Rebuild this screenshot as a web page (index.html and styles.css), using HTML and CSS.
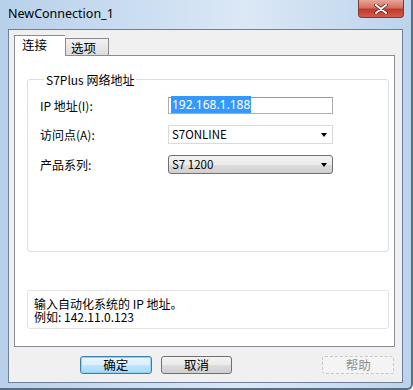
FILE: index.html
```html
<!DOCTYPE html>
<html lang="zh-CN">
<head>
    <meta charset="UTF-8">
    <title>NewConnection_1</title>
    <link rel="stylesheet" href="styles.css">
</head>
<body>

    <div class="window">
        <div class="title-bar">
            <span class="title">NewConnection_1</span>
            <span class="close-btn">
                <svg width="14" height="10" viewBox="0 0 14 10">
                    <path d="M2 1 L12 9 M12 1 L2 9" stroke="#5a1a1a" stroke-width="3.4" stroke-linecap="round"/>
                    <path d="M2 1 L12 9 M12 1 L2 9" stroke="#fff" stroke-width="2" stroke-linecap="round"/>
                </svg>
            </span>
        </div>

        <div class="client">
            <div class="tabs">
                <div class="tab active">连接</div>
                <div class="tab">选项</div>
            </div>

            <div class="tab-panel">
                <fieldset class="group">
                    <legend>S7Plus 网络地址</legend>
                    <div class="form-grid">
                        <label>IP 地址(I):</label>
                        <div class="text-input"><span class="selected">192.168.1.188</span></div>

                        <label>访问点(A):</label>
                        <div class="combo">S7ONLINE<span class="arrow"></span></div>

                        <label>产品系列:</label>
                        <div class="combo combo-list">S7 1200<span class="arrow"></span></div>
                    </div>
                </fieldset>

                <div class="hint">
                    <div class="hint-line">输入自动化系统的 IP 地址。</div>
                    <div class="hint-line">例如: 142.11.0.123</div>
                </div>
            </div>

            <div class="buttons">
                <button class="btn btn-default">确定</button>
                <button class="btn">取消</button>
                <button class="btn btn-help">帮助</button>
            </div>
        </div>
    </div>

</body>
</html>
```

FILE: styles.css
```css
body {
    margin: 0;
    background: #ffffff;
    font-family: "Noto Sans CJK SC", "Noto Sans", sans-serif;
    font-size: 12px;
    color: #000;
}

.window {
    width: 413px;
    height: 390px;
    box-sizing: border-box;
    background: linear-gradient(90deg, #b8d0ea 0%, #cfe0f3 40%, #dbe8f6 60%, #bcd3ec 100%);
    border-right: 2px solid #5b6d80;
    border-bottom: 2px solid #5b6d80;
    border-bottom-right-radius: 6px;
    display: flex;
    flex-direction: column;
}

.title-bar {
    height: 29px;
    display: flex;
    align-items: flex-start;
    justify-content: space-between;
    padding-left: 8px;
    padding-right: 7px;
}

.title {
    font-family: "Noto Sans", sans-serif;
    font-size: 12.5px;
    margin-top: 5px;
    color: #000;
}

.close-btn {
    width: 46px;
    height: 18px;
    box-sizing: border-box;
    border: 1px solid #7a3b3b;
    border-top: none;
    border-bottom-left-radius: 4px;
    border-bottom-right-radius: 4px;
    background: linear-gradient(#e8a69a 0%, #d4705f 45%, #c0392b 55%, #d45a4a 100%);
    display: flex;
    align-items: center;
    justify-content: center;
}

.client {
    margin: 0 8px 5px 8px;
    flex: 1;
    background: #f0f0f0;
    border: 1px solid #6f8197;
    padding: 5px 8px 0 5px;
}

.tabs {
    display: flex;
    align-items: flex-end;
    height: 20px;
    position: relative;
    z-index: 1;
}

.tab {
    box-sizing: border-box;
    height: 17px;
    width: 44px;
    padding-left: 5px;
    border: 1px solid #898c95;
    border-bottom: none;
    background: linear-gradient(#f2f2f2, #dcdcdc);
    line-height: 18px;
    font-size: 12.5px;
}

.tab.active {
    height: 21px;
    width: 51px;
    padding-left: 7px;
    background: #ffffff;
    margin-bottom: -1px;
    border-right: none;
    line-height: 18px;
}

.tab-panel {
    box-sizing: border-box;
    height: 292px;
    width: 381px;
    background: #ffffff;
    border: 1px solid #898c95;
    padding: 15px 6px 0 12px;
}

.group {
    margin: 0;
    width: 362px;
    height: 181px;
    box-sizing: border-box;
    border: 1px solid #d5dfe5;
    border-radius: 3px;
    padding: 9px 0 0 12px;
}

.group legend {
    padding: 0 2px;
    margin-left: 4px;
    font-size: 12px;
}

.form-grid {
    display: grid;
    grid-template-columns: 128px 165px;
    grid-template-rows: 17px 19px 19px;
    row-gap: 11px;
    align-items: center;
}

.form-grid label {
    font-size: 12px;
}

.text-input {
    height: 17px;
    box-sizing: border-box;
    border: 1px solid #abadb3;
    border-top-color: #8e9aa8;
    background: #fff;
    padding-left: 2px;
    line-height: 14px;
    font-family: "Noto Sans", sans-serif;
    font-size: 12px;
}

.selected {
    background: #3399ff;
    color: #fff;
    padding: 0 1px;
}

.combo {
    position: relative;
    height: 19px;
    box-sizing: border-box;
    border: 1px solid #dadada;
    background: #fff;
    padding-left: 3px;
    line-height: 17px;
    font-size: 11.5px;
}

.combo-list {
    border: 1px solid #707070;
    border-radius: 3px;
    background: linear-gradient(#f2f2f2 0%, #ebebeb 50%, #dddddd 51%, #cfcfcf 100%);
}

.arrow {
    position: absolute;
    right: 5px;
    top: 7px;
    width: 0;
    height: 0;
    border-left: 3.5px solid transparent;
    border-right: 3.5px solid transparent;
    border-top: 4px solid #000;
}

.hint {
    margin-top: 38px;
    width: 362px;
    height: 39px;
    box-sizing: border-box;
    border: 1px solid #e3e3e3;
    border-radius: 3px;
    padding: 6px 0 0 6px;
    font-size: 12px;
}

.hint-line {
    height: 13px;
    line-height: 13px;
}

.buttons {
    display: flex;
    margin-top: 9px;
    padding-left: 66px;
}

.btn {
    width: 73px;
    height: 18px;
    box-sizing: border-box;
    border: 1px solid #707070;
    border-radius: 3px;
    background: linear-gradient(#f2f2f2 0%, #ebebeb 50%, #dddddd 51%, #cfcfcf 100%);
    font-family: "Noto Sans CJK SC", sans-serif;
    font-size: 12.5px;
    line-height: 14px;
    padding: 0;
    margin-right: 9px;
}

.btn-default {
    border-color: #3c7fb1;
    background: linear-gradient(#eaf6fd 0%, #d9f0fc 50%, #bee6fd 51%, #a7d9f5 100%);
    box-shadow: inset 0 0 0 1px #8fd1f5;
}

.btn-help {
    margin-left: 81px;
    margin-right: 0;
    border: 1px dashed #c8c8c8;
    background: #f4f4f4;
    color: #909090;
}
```
